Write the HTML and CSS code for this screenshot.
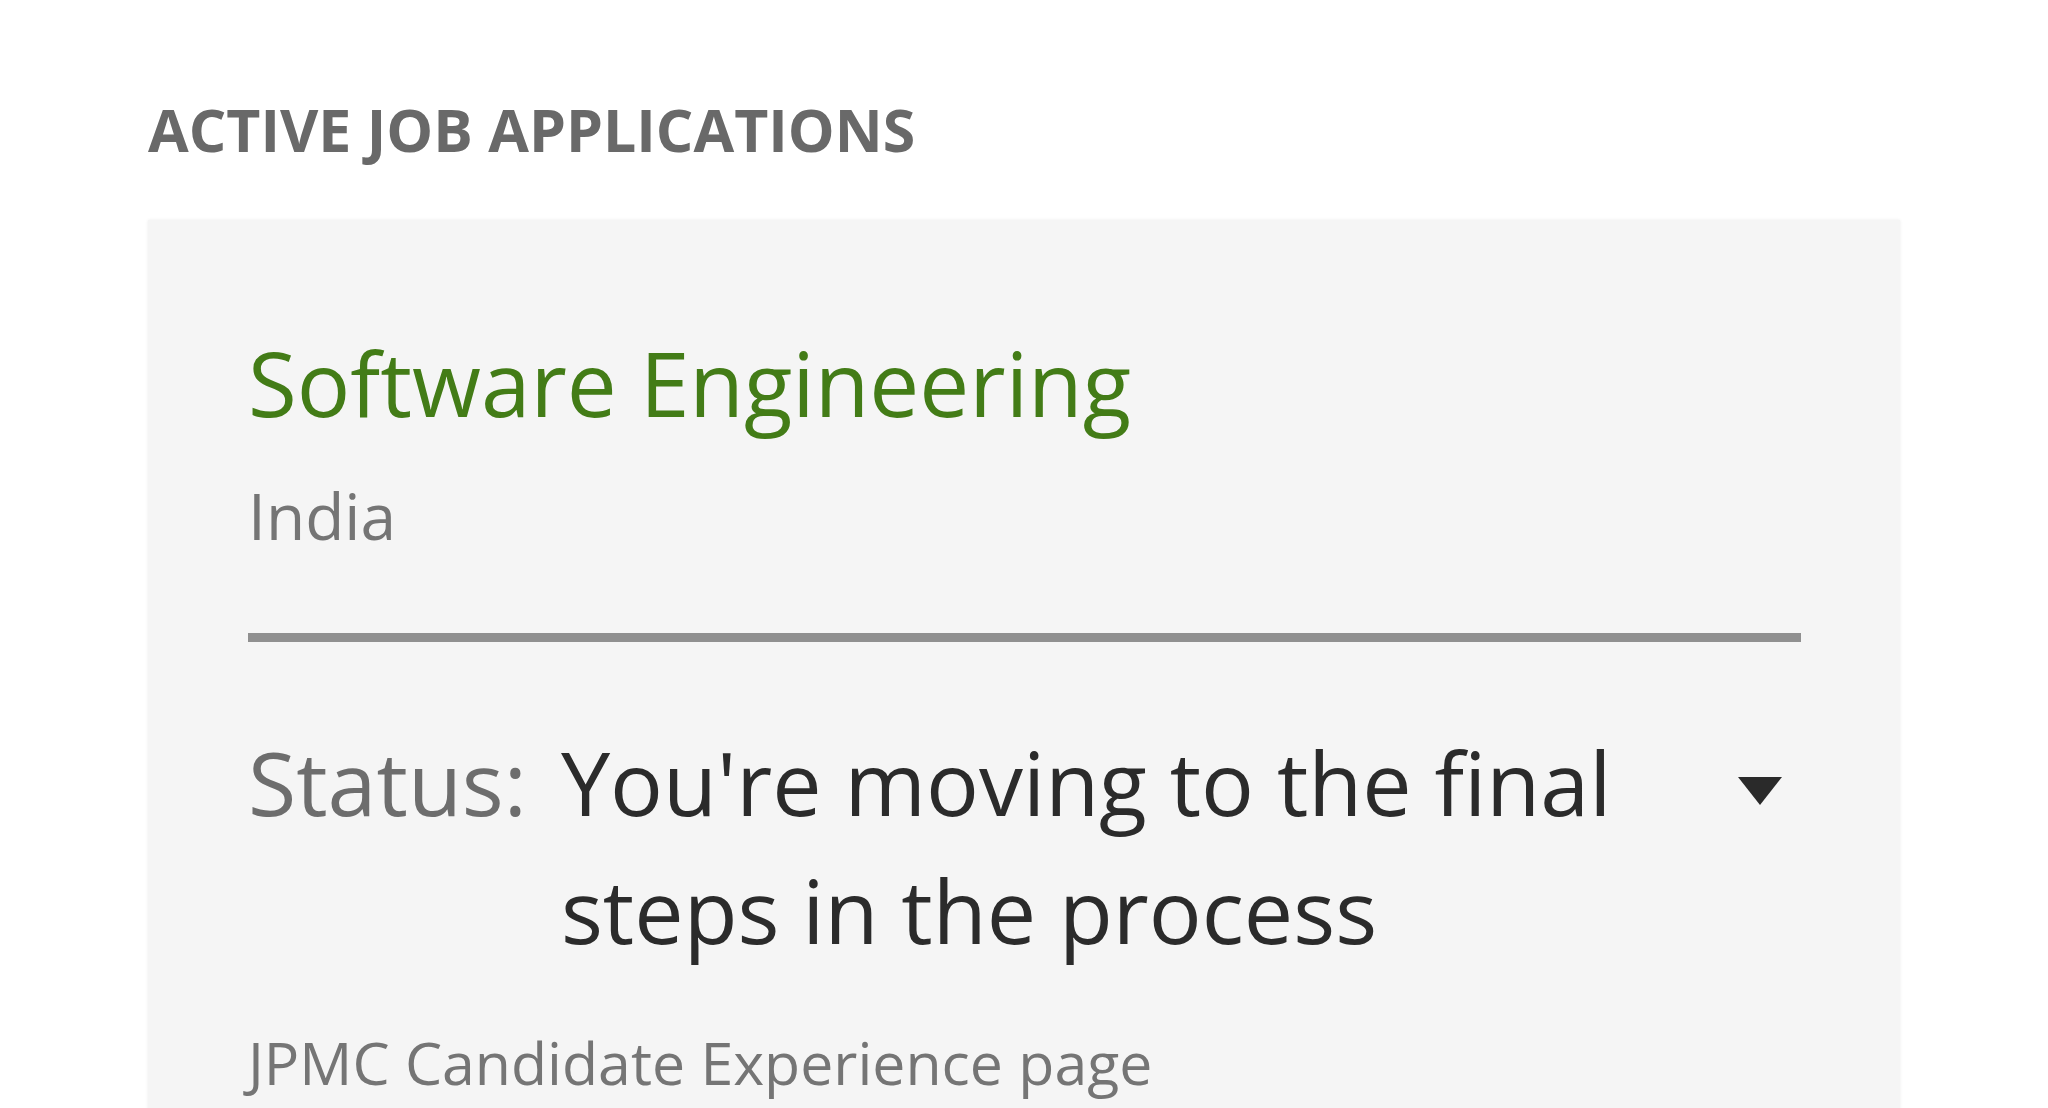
FILE: index.html
```html
<!DOCTYPE html>
<html lang="en">
<head>
<meta charset="UTF-8">
<meta name="viewport" content="width=device-width, initial-scale=1.0">
<title>Active Job Applications</title>
<link rel="stylesheet" href="styles.css">
</head>
<body>

<div class="applications">
    <h2 class="applications-title">ACTIVE JOB APPLICATIONS</h2>

    <div class="job-card">
        <div class="job-name">Software Engineering</div>
        <div class="job-location">India</div>
        <div class="job-divider"></div>
        <div class="job-status">
            <span class="status-label">Status:</span>
            <span class="status-value">You're moving to the final steps in the process</span>
            <span class="status-toggle"></span>
        </div>
        <div class="job-link">JPMC Candidate Experience page</div>
    </div>
</div>

</body>
</html>
```

FILE: styles.css
```css
body {
    margin: 0;
    background-color: #ffffff;
    font-family: "Open Sans", "Liberation Sans", sans-serif;
}

.applications {
    padding: 93px 148px 0 148px;
}

.applications-title {
    margin: 0 0 55px 0;
    font-size: 59px;
    font-weight: 700;
    line-height: 72px;
    color: #696969;
}

.job-card {
    background-color: #f5f5f5;
    padding: 110px 99px 120px 100px;
    box-shadow: 0 0 3px rgba(0, 0, 0, 0.08);
}

.job-name {
    font-size: 89px;
    line-height: 106px;
    color: #437c17;
}

.job-location {
    margin-top: 42px;
    font-size: 64px;
    line-height: 76px;
    color: #757575;
}

.job-divider {
    margin-top: 79px;
    height: 9px;
    background-color: #909090;
}

.job-status {
    display: flex;
    align-items: flex-start;
    margin-top: 76px;
    font-size: 88px;
    line-height: 128px;
}

.status-label {
    color: #6d6d6d;
    margin-right: 34px;
    white-space: nowrap;
}

.status-value {
    flex: 1;
    color: #2b2b2b;
}

.status-toggle {
    width: 0;
    height: 0;
    margin: 59px 19px 0 40px;
    border-left: 22px solid transparent;
    border-right: 22px solid transparent;
    border-top: 28px solid #2a2a2a;
}

.job-link {
    margin-top: 52px;
    font-size: 59px;
    line-height: 72px;
    color: #757575;
}
```
